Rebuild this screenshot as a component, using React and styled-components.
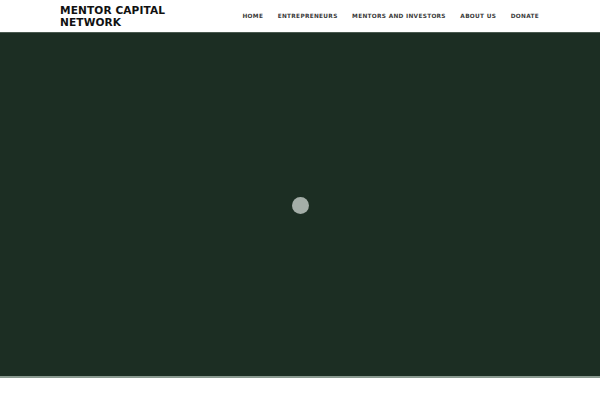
import styled, { createGlobalStyle } from 'styled-components';

const GlobalStyle = createGlobalStyle`
  html, body {
    margin: 0;
    padding: 0;
    background: #ffffff;
  }
  body {
    font-family: "DejaVu Sans", "Liberation Sans", sans-serif;
  }
`;

const NAV_ITEMS = ['Home', 'Entrepreneurs', 'Mentors and Investors', 'About Us', 'Donate'];

const App = () => {
  return (
    <>
      <GlobalStyle />
      <Header>
        <Logo>
          Mentor Capital
          <br />
          Network
        </Logo>
        <Nav>
          {NAV_ITEMS.map((item) => (
            <NavLink key={item} href="#">
              {item}
            </NavLink>
          ))}
        </Nav>
      </Header>
      <Hero>
        <Loader />
      </Hero>
    </>
  );
};

const Header = styled.header`
  height: 32px;
  display: flex;
  align-items: center;
  justify-content: space-between;
  padding: 0 61px 0 60px;
  background: #ffffff;
`;

const Logo = styled.div`
  font-size: 10.6px;
  line-height: 11.5px;
  font-weight: bold;
  text-transform: uppercase;
  letter-spacing: 0.1px;
  color: #111111;
  padding-top: 1px;
`;

const Nav = styled.nav`
  display: flex;
  gap: 14.5px;
`;

const NavLink = styled.a`
  font-size: 5.8px;
  font-weight: bold;
  text-transform: uppercase;
  letter-spacing: 0.3px;
  color: #3a3a3a;
  text-decoration: none;
`;

const Hero = styled.section`
  height: 346px;
  background: #1c2e23;
  border-top: 1px solid #4a5a50;
  border-bottom: 2px solid #8a9a90;
  box-sizing: border-box;
  display: flex;
  align-items: center;
  justify-content: center;
  padding-top: 2px;
`;

const Loader = styled.div`
  width: 17px;
  height: 17px;
  border-radius: 50%;
  background: #a4aea8;
`;

export default App;
